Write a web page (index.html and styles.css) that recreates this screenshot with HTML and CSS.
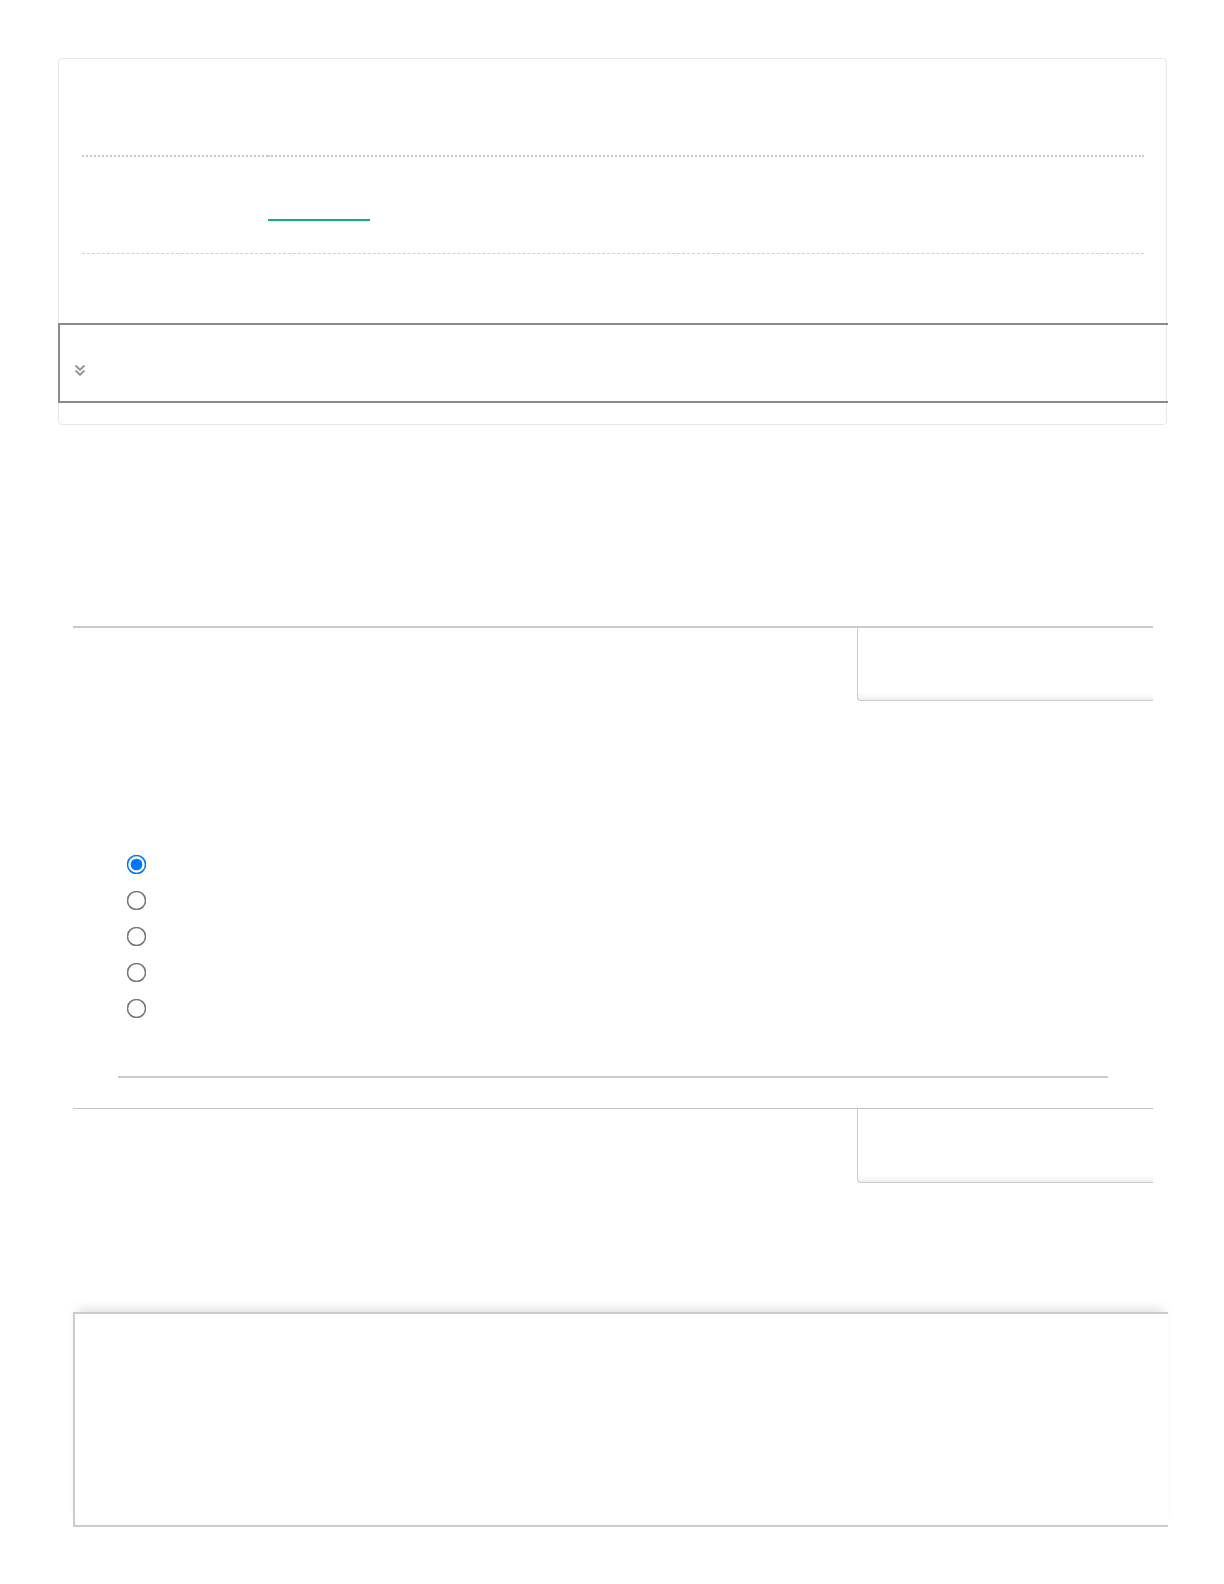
FILE: index.html
```html
<!DOCTYPE html>
<html lang="en">
<head>
<meta charset="utf-8">
<title>Form</title>
<link rel="stylesheet" href="styles.css">
</head>
<body>
<div class="page">
  <section class="card">
    <div class="table-row">
      <div class="cell cell-label"></div>
      <div class="cell cell-value"><span class="progress"></span></div>
    </div>
    <div class="toggle-bar">
      <svg class="chevron" width="12" height="13" viewBox="0 0 12 13" aria-hidden="true">
        <path d="M1.5 1.5 L6 5.8 L10.5 1.5" fill="none" stroke="#9a9a9a" stroke-width="2.2"/>
        <path d="M1.5 6.5 L6 10.8 L10.5 6.5" fill="none" stroke="#9a9a9a" stroke-width="2.2"/>
      </svg>
    </div>
  </section>

  <div class="tabbar tabbar-first">
    <div class="tab"></div>
  </div>

  <form class="options">
    <label class="option"><input type="radio" name="opt" checked></label>
    <label class="option"><input type="radio" name="opt"></label>
    <label class="option"><input type="radio" name="opt"></label>
    <label class="option"><input type="radio" name="opt"></label>
    <label class="option"><input type="radio" name="opt"></label>
  </form>

  <hr class="divider">

  <div class="tabbar tabbar-second">
    <div class="tab tab-second"></div>
  </div>

  <div class="panel"></div>
</div>
</body>
</html>
```

FILE: styles.css
```css
html, body {
  margin: 0;
  padding: 0;
  background: #ffffff;
  font-family: "Liberation Sans", Arial, sans-serif;
}

.page {
  padding-top: 58px;
  padding-bottom: 56px;
}

.card {
  box-sizing: border-box;
  margin-left: 58px;
  width: 1109px;
  height: 367px;
  padding: 96px 22px 0 23px;
  border: 1px solid #e8e8e8;
  border-radius: 4px;
}

.table-row {
  display: grid;
  grid-template-columns: 186px 1fr;
}

.cell {
  box-sizing: border-box;
  height: 99px;
  border-top: 2px dotted #c8c8c8;
  border-bottom: 1px dashed #d2d2d2;
}

.cell-value {
  padding-top: 62px;
}

.progress {
  display: block;
  width: 102px;
  height: 2px;
  background: #13a98b;
}

.toggle-bar {
  box-sizing: border-box;
  display: flex;
  align-items: flex-start;
  margin: 69px 0 0 -24px;
  width: 1110px;
  height: 80px;
  padding: 39px 0 0 14px;
  border: 2px solid #8a8a8a;
  border-right: none;
}

.chevron {
  display: block;
}

.tabbar {
  display: flex;
  justify-content: flex-end;
  margin-left: 73px;
  width: 1080px;
}

.tabbar-first {
  margin-top: 201px;
  border-top: 2px solid #cacaca;
}

.tabbar-second {
  margin-top: 30px;
  border-top: 1px solid #c4c4c4;
}

.tab {
  box-sizing: border-box;
  width: 296px;
  height: 73px;
  border-left: 1px solid #cccccc;
  border-bottom: 1px solid #cccccc;
  border-bottom-left-radius: 4px;
  box-shadow: inset 0 -7px 6px -5px rgba(0, 0, 0, 0.09);
}

.tab-second {
  height: 74px;
}

.options {
  margin: 145px 0 0 130px;
  display: flex;
  flex-direction: column;
}

.option {
  display: flex;
  align-items: center;
  height: 36px;
}

.option input {
  width: 13px;
  height: 13px;
  margin: 0;
  transform: scale(1.5);
}

.divider {
  margin: 50px 0 0 118px;
  width: 990px;
  height: 0;
  border: none;
  border-top: 2px solid #cccccc;
}

.panel {
  box-sizing: border-box;
  margin: 129px 0 0 73px;
  width: 1095px;
  height: 215px;
  border: 2px solid #cccccc;
  border-right: none;
  box-shadow: 0 -8px 10px -5px rgba(0, 0, 0, 0.13);
}
```
